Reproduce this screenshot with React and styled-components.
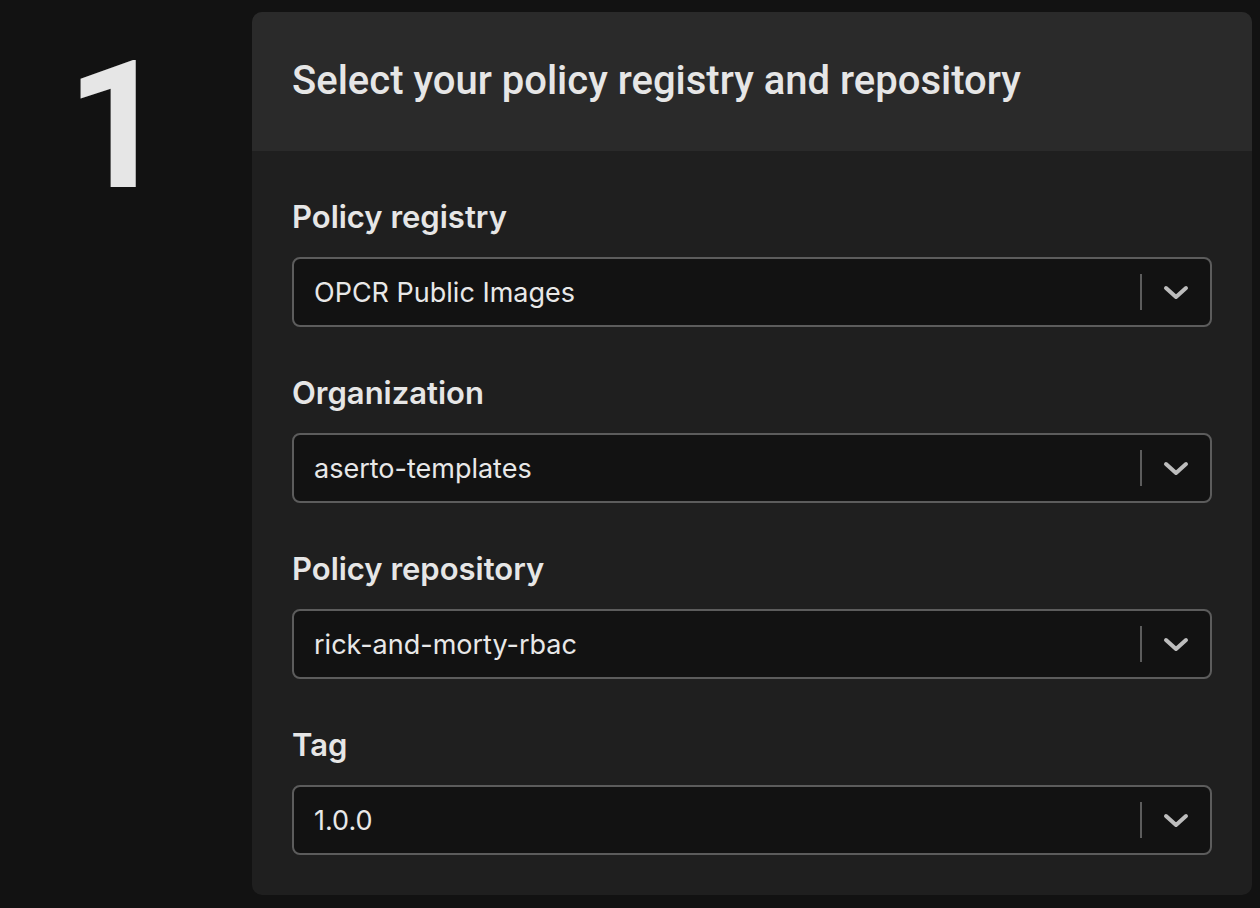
import styled, { createGlobalStyle } from 'styled-components';

const GlobalStyle = createGlobalStyle`
	html, body {
		margin: 0;
		padding: 0;
		background: #121212;
	}
	body {
		font-family: Inter, "Noto Sans", sans-serif;
		color: #e8e8e8;
	}
`;

const Page = styled.div`
	width: 1260px;
	height: 908px;
	display: flex;
	padding: 12px 8px 0 0;
	box-sizing: border-box;
	overflow: hidden;
`;

const StepColumn = styled.div`
	width: 252px;
	flex-shrink: 0;
	display: flex;
	justify-content: center;
	padding-right: 18px;
	box-sizing: border-box;
`;

const StepNumber = styled.div`
	font-family: Roboto, "Liberation Sans", sans-serif;
	font-weight: 700;
	font-size: 178px;
	line-height: 1;
	color: #e6e6e6;
	margin-top: 25px;
`;

const Card = styled.section`
	flex: 1;
	height: 883px;
	background: #1f1f1f;
	border-radius: 10px;
	overflow: hidden;
`;

const CardHeader = styled.header`
	height: 139px;
	background: #2a2a2a;
	display: flex;
	align-items: center;
	padding: 0 40px;
`;

const Title = styled.h1`
	margin: 0;
	font-family: Roboto, "Liberation Sans", sans-serif;
	font-weight: 500;
	font-size: 40px;
	color: #e6e6e6;
	margin-top: -2px;
`;

const CardBody = styled.div`
	padding: 48px 40px 0;
	display: flex;
	flex-direction: column;
	gap: 48px;
`;

const Field = styled.div`
	display: flex;
	flex-direction: column;
	gap: 22px;
`;

const Label = styled.label`
	font-size: 31px;
	font-weight: 600;
	line-height: 36px;
	color: #e6e6e6;
`;

const SelectBox = styled.div`
	height: 70px;
	box-sizing: border-box;
	border: 2px solid #5c5c5c;
	border-radius: 8px;
	background: #121212;
	display: flex;
	align-items: center;
`;

const Value = styled.span`
	flex: 1;
	padding-left: 20px;
	font-size: 27px;
	color: #e8e8e8;
`;

const Separator = styled.span`
	width: 2px;
	height: 36px;
	background: #5c5c5c;
`;

const Indicator = styled.span`
	width: 68px;
	display: flex;
	justify-content: center;
	align-items: center;
	padding-top: 2px;
	color: #bdbdbd;
`;

function Chevron() {
	return (
		<svg width="26" height="16" viewBox="0 0 26 16" fill="none">
			<path d="M3 3 L13 12 L23 3" stroke="currentColor" strokeWidth="4" strokeLinecap="round" strokeLinejoin="round" />
		</svg>
	);
}

const fields = [
	{ label: 'Policy registry', value: 'OPCR Public Images' },
	{ label: 'Organization', value: 'aserto-templates' },
	{ label: 'Policy repository', value: 'rick-and-morty-rbac' },
	{ label: 'Tag', value: '1.0.0' },
];

export default function App() {
	return (
		<>
			<GlobalStyle />
			<Page>
				<StepColumn>
					<StepNumber>1</StepNumber>
				</StepColumn>
				<Card>
					<CardHeader>
						<Title>Select your policy registry and repository</Title>
					</CardHeader>
					<CardBody>
						{fields.map((f) => (
							<Field key={f.label}>
								<Label>{f.label}</Label>
								<SelectBox>
									<Value>{f.value}</Value>
									<Separator />
									<Indicator>
										<Chevron />
									</Indicator>
								</SelectBox>
							</Field>
						))}
					</CardBody>
				</Card>
			</Page>
		</>
	);
}
